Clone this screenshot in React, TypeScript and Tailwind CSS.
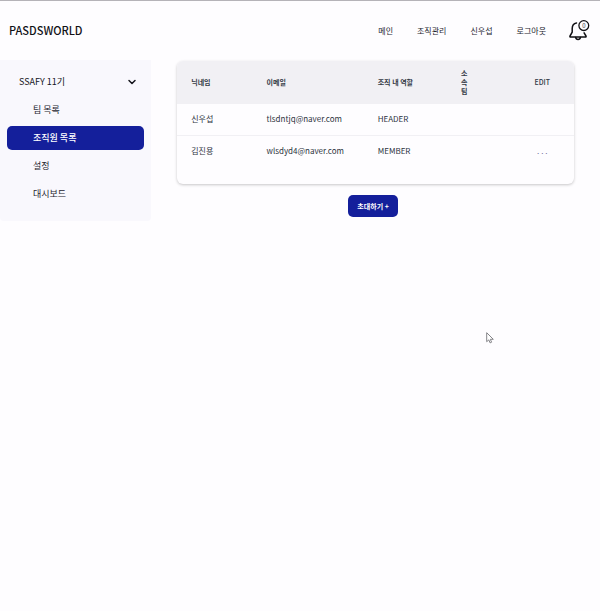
import { ChevronDown } from "lucide-react";

const navItems = ["메인", "조직관리", "신우섭", "로그아웃"];
const sideItems = ["팀 목록", "조직원 목록", "설정", "대시보드"];
const members = [
  { name: "신우섭", email: "tlsdntjq@naver.com", role: "HEADER", editable: false },
  { name: "김진용", email: "wlsdyd4@naver.com", role: "MEMBER", editable: true },
];

function Header() {
  return (
    <header className="flex h-[60px] items-center justify-between border-t border-[#b5b3b8] pr-[10px] pl-[9px]">
      <a href="#" className="text-[11px] font-medium text-[#111116]">PASDSWORLD</a>
      <div className="flex items-center gap-[22px]">
        <nav className="flex gap-6 text-[8px] leading-3 text-[#25252f]">
          {navItems.map((item) => (
            <a key={item} href="#">{item}</a>
          ))}
        </nav>
        <button type="button" aria-label="알림" className="block">
          <svg viewBox="0 0 22 22" className="h-[22px] w-[22px]" fill="none" stroke="#101014" strokeWidth="1.5" strokeLinecap="round" strokeLinejoin="round">
            <path d="M8.5 3C5.6 3.6 4.2 5.8 4.2 8.6v3.6L2 16c-.3.6 0 1.1.7 1.1h14.6c.7 0 1-.5.7-1.1l-1.9-3.2" />
            <path d="M7.7 17.4c.4 2.7 4.3 2.7 4.7 0" />
            <circle cx="15.8" cy="5.6" r="4.9" strokeWidth="1.3" />
            <text x="15.8" y="7.9" textAnchor="middle" fontSize="6" fill="#303036" stroke="none">0</text>
          </svg>
        </button>
      </div>
    </header>
  );
}

function Sidebar() {
  return (
    <aside className="w-[25.2%] rounded-b bg-[#f9f8fd] px-[7px] pt-[10px] pb-[15px]">
      <button type="button" className="flex h-6 w-full items-center justify-between pr-[6px] pl-3 text-[9px] text-[#15151c]">
        SSAFY 11기
        <ChevronDown size={12} strokeWidth={3} />
      </button>
      <ul className="mt-1 flex flex-col gap-1 text-[9px]">
        {sideItems.map((item, i) => (
          <li key={item}>
            <a
              href="#"
              className={
                i === 1
                  ? "flex h-6 items-center rounded-[5px] bg-[#141f9b] pl-[26px] font-medium text-white"
                  : "flex h-6 items-center pl-[26px] text-[#25252f]"
              }
            >
              {item}
            </a>
          </li>
        ))}
      </ul>
    </aside>
  );
}

function MemberTable() {
  return (
    <div className="overflow-hidden rounded-md bg-[#fefdff] pb-[18px] shadow-[0_1px_3px_rgba(0,0,0,0.22)]">
      <table className="w-full table-fixed text-left">
        <colgroup>
          <col className="w-[19%]" />
          <col className="w-[28%]" />
          <col className="w-[21%]" />
          <col className="w-[16%]" />
          <col className="w-[16%]" />
        </colgroup>
        <thead className="bg-[#f1f0f4] text-[7px] leading-[9px] text-[#343a46]">
          <tr className="h-[43px]">
            <th className="pl-[14px] font-bold">닉네임</th>
            <th className="pl-[14px] font-bold">이메일</th>
            <th className="pl-[14px] font-bold">조직 내 역할</th>
            <th className="pr-10 pl-[14px] font-bold">소속팀</th>
            <th className="text-center font-medium">EDIT</th>
          </tr>
        </thead>
        <tbody className="text-[8px] leading-3 text-[#2d3340]">
          {members.map((m) => (
            <tr key={m.email} className="h-[31px] border-b border-[#f1f0f4] last:border-b-0">
              <td className="pl-[14px]">{m.name}</td>
              <td className="pl-[14px]">{m.email}</td>
              <td className="pl-[14px]">{m.role}</td>
              <td />
              <td className="text-center">
                {m.editable && <button type="button" aria-label="편집" className="text-[#6a6a94]">. . .</button>}
              </td>
            </tr>
          ))}
        </tbody>
      </table>
    </div>
  );
}

export default function App() {
  return (
    <div className="relative min-h-screen bg-[#fefdff] font-['Noto_Sans_CJK_KR',sans-serif]">
      <Header />
      <div className="flex items-start">
        <Sidebar />
        <main className="flex flex-1 flex-col px-[26px] pt-px">
          <MemberTable />
          <button type="button" className="mt-[11px] mr-[5px] h-[22px] self-center rounded-[5px] bg-[#141f9b] px-[9px] text-[7px] font-bold text-white">
            초대하기 +
          </button>
        </main>
      </div>
      <svg className="absolute top-[332px] left-[486px] h-3 w-2" viewBox="0 0 8 12" fill="#fff" stroke="#77777c" strokeWidth="0.9" strokeLinejoin="round">
        <path d="M.7.7v9l2.1-1.8 1.3 3 1.5-.7-1.3-2.9h3L.7.7Z" />
      </svg>
    </div>
  );
}
